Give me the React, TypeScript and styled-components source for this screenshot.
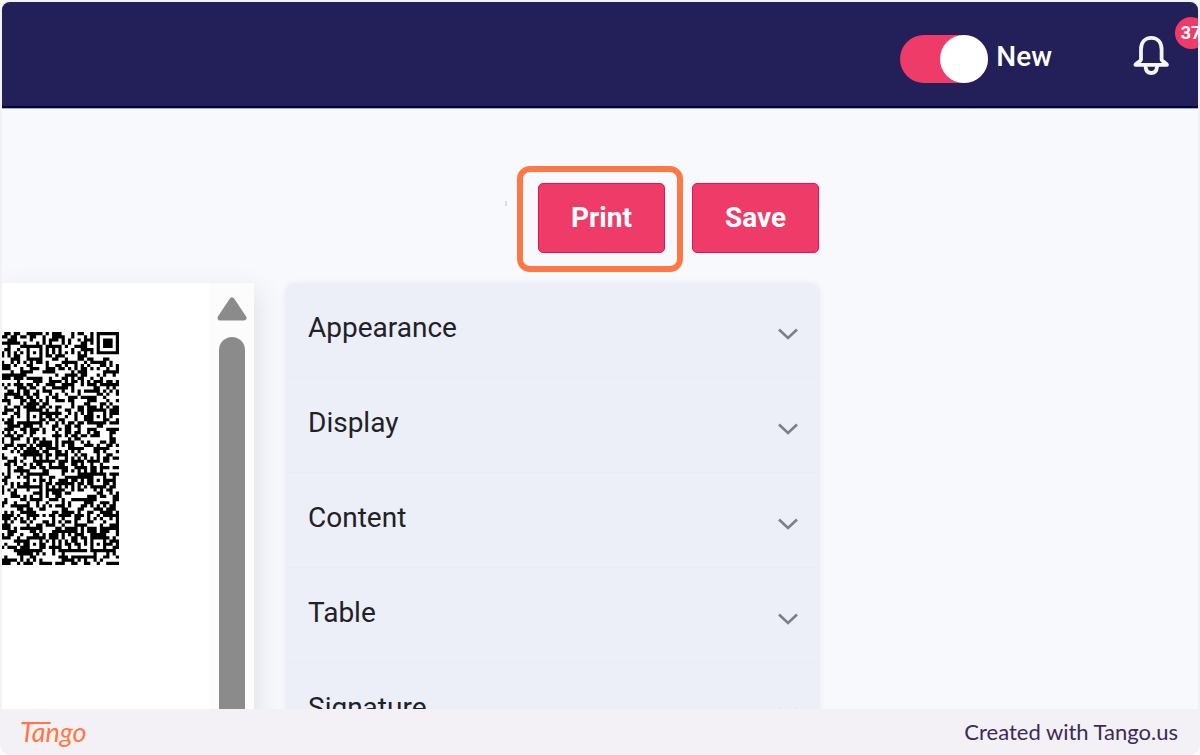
import React from "react";
import styled, { createGlobalStyle } from "styled-components";

const GlobalStyle = createGlobalStyle`
  *, *::before, *::after { box-sizing: border-box; }
  body { margin: 0; background: #fdfdfe; font-family: Roboto, "Liberation Sans", sans-serif; }
  button { font: inherit; border: 0; margin: 0; cursor: pointer; }
`;

const Page = styled.div`
  display: flex;
  flex-direction: column;
  height: 100vh;
  padding: 2px 2px 0;
  background: #f3f1f6;
  border-radius: 10px;
  overflow: hidden;
`;

const Screen = styled.main`
  flex: 1;
  min-height: 0;
  overflow: hidden;
  border-radius: 8px 8px 0 0;
  background: #f8f9fd;
`;

const TopBar = styled.header`
  display: flex;
  justify-content: flex-end;
  align-items: center;
  gap: 81px;
  height: 106px;
  padding: 0 29px 0 0;
  background: #221f59;
  border-bottom: 2px solid #02003f;
  box-shadow: 0 1px 0 #a9abb5;
`;

const SwitchLabel = styled.label`
  display: flex;
  align-items: center;
  gap: 8px;
  padding-top: 10px;
  color: #ffffff;
  font-size: 28px;
  line-height: 32px;
  font-weight: 500;
`;

const SwitchText = styled.span`
  padding-bottom: 4px;
`;

const Switch = styled.input`
  appearance: none;
  display: flex;
  justify-content: flex-end;
  width: 88px;
  height: 48px;
  margin: 0;
  border-radius: 24px;
  background: #ef3b68;
  &::before {
    content: "";
    width: 48px;
    height: 48px;
    border-radius: 50%;
    background: #ffffff;
  }
  &:not(:checked) { justify-content: flex-start; background: #8c8aa8; }
`;

const BellButton = styled.button`
  position: relative;
  display: flex;
  padding: 2px 0 0;
  background: none;
`;

const Badge = styled.span`
  position: absolute;
  left: 42px;
  top: -16px;
  width: 32px;
  height: 32px;
  border-radius: 50%;
  background: #ef3b68;
  color: #ffffff;
  font-size: 18px;
  line-height: 32px;
  font-weight: 700;
  text-align: center;
`;

const Toolbar = styled.div`
  display: flex;
  justify-content: flex-end;
  align-items: center;
  gap: 27px;
  padding: 75px 379px 30px 0;
`;

const Speck = styled.span`
  width: 2px;
  height: 5px;
  margin: 0 4px 30px 0;
  background: #d3dfec;
`;

const ActionButton = styled.button`
  width: 127px;
  height: 70px;
  padding: 0;
  border-radius: 5px;
  border: 1px solid #ec1250;
  background: #ef3b68;
  color: #ffffff;
  font-size: 28px;
  line-height: 32px;
  font-weight: 700;
`;

const Highlighted = styled.div`
  position: relative;
  display: flex;
  &::after {
    content: "";
    position: absolute;
    inset: -17px -18px -19px -21px;
    border: 6px solid #ff7742;
    border-radius: 13px;
    pointer-events: none;
  }
`;

const Workspace = styled.div`
  display: grid;
  grid-template-columns: 252px minmax(0, 1fr);
  gap: 31px;
  padding-right: 378px;
`;

const Preview = styled.section`
  display: flex;
  justify-content: space-between;
  background: #ffffff;
  box-shadow: 4px 8px 24px rgba(60, 70, 100, 0.13);
`;

const Code = styled.svg`
  display: block;
  width: 117px;
  height: 233px;
  margin-top: 49px;
`;

const ScrollTrack = styled.div`
  display: flex;
  flex-direction: column;
  align-items: center;
  gap: 16px;
  width: 45px;
  padding-top: 14px;
  background: #fcfcfc;
`;

const ScrollThumb = styled.div`
  flex: 1;
  width: 26px;
  border-radius: 13px;
  background: #8b8b8b;
`;

const Panel = styled.section`
  border-radius: 10px;
  background: #eceff8;
  box-shadow: 0 0 6px rgba(60, 70, 100, 0.07);
`;

const PanelRow = styled.button`
  display: flex;
  align-items: center;
  justify-content: space-between;
  width: 100%;
  height: 95px;
  padding: 0 22px 5px 23px;
  border-bottom: 1px solid #e8ecf5;
  background: none;
  color: #212126;
  font-size: 28px;
  line-height: 32px;
  text-align: left;
`;

const Chevron = styled.svg`
  width: 20px;
  height: 12px;
  margin-top: 13px;
`;

const Footer = styled.footer`
  display: flex;
  align-items: center;
  justify-content: space-between;
  height: 46px;
  padding: 0 20px 0 18px;
  background: #f3f1f6;
`;

const Logo = styled.a`
  position: relative;
  color: #ff7742;
  font-family: Lato, sans-serif;
  font-size: 27px;
  line-height: 32px;
  font-style: italic;
  font-weight: 400;
  text-decoration: none;
  &::before {
    content: "";
    position: absolute;
    left: 2px;
    top: 6px;
    width: 29px;
    height: 2px;
    border-radius: 1px;
    background: #ff7742;
  }
`;

const Credit = styled.span`
  color: #3d2a55;
  font-family: Lato, sans-serif;
  font-size: 22px;
  line-height: 32px;
`;

const CODE_SIZE = 73;
const FIRST_COLUMN = 36;

const isDark = (() => {
  const noise = (x: number, y: number) => {
    let h = Math.imul(x + 101, 374761393) ^ Math.imul(y + 57, 668265263);
    h = Math.imul(h ^ (h >>> 13), 1274126177);
    h = Math.imul(h ^ (h >>> 15), 2246822519);
    return ((h ^ (h >>> 16)) >>> 0) / 4294967296 < 0.51;
  };
  const ring = (dx: number, dy: number) => Math.max(Math.abs(dx), Math.abs(dy));
  return (x: number, y: number) => {
    if (x >= CODE_SIZE) return false;
    const finder = ring(x - (CODE_SIZE - 4), y - 3);
    if (finder <= 4) return finder === 3 || finder <= 1;
    for (const ax of [46, 66]) {
      for (const ay of [6, 26, 46, 66]) {
        if (ax === 66 && ay === 6) continue;
        const d = ring(x - ax, y - ay);
        if (d <= 2) return d !== 1;
      }
    }
    if (y === 6) return x % 2 === 0;
    return noise(x, y);
  };
})();

const codePath = (() => {
  let d = "";
  for (let y = 0; y < CODE_SIZE; y++) {
    for (let x = FIRST_COLUMN; x < CODE_SIZE; x++) {
      if (!isDark(x, y)) continue;
      let end = x;
      while (isDark(end, y)) end++;
      d += `M${x} ${y}H${end}V${y + 1}H${x}Z`;
      x = end;
    }
  }
  return d;
})();

const sections = ["Appearance", "Display", "Content", "Table", "Signature"];

export default function App() {
  return (
    <Page>
      <GlobalStyle />
      <Screen>
        <TopBar>
          <SwitchLabel>
            <Switch type="checkbox" role="switch" defaultChecked />
            <SwitchText>New</SwitchText>
          </SwitchLabel>
          <BellButton aria-label="Notifications">
            <svg width="36" height="41" viewBox="0 0 36 41" fill="none" stroke="#f5f5fb" strokeWidth="3.8" strokeLinecap="round" strokeLinejoin="round">
              <path d="M8 14.5C8 7.5 12 2.8 18.3 2.8S28.6 7.5 28.6 14.5V24.5C28.6 26.5 34 28 34 29.8H2.4C2.4 28 8 26.5 8 24.5Z" />
              <path d="M12.6 32C13 36 15.3 38 18.3 38S23.6 36 24 32" />
            </svg>
            <Badge>37</Badge>
          </BellButton>
        </TopBar>
        <Toolbar>
          <Speck />
          <Highlighted>
            <ActionButton>Print</ActionButton>
          </Highlighted>
          <ActionButton>Save</ActionButton>
        </Toolbar>
        <Workspace>
          <Preview>
            <Code viewBox="36.3 0 36.7 73" preserveAspectRatio="none" role="img" aria-label="QR code">
              <path d={codePath} fill="#000000" />
            </Code>
            <ScrollTrack>
              <svg width="30" height="24" viewBox="0 0 30 24">
                <path d="M15 3 27 21H3Z" fill="#8b8b8b" stroke="#8b8b8b" strokeWidth="5" strokeLinejoin="round" />
              </svg>
              <ScrollThumb />
            </ScrollTrack>
          </Preview>
          <Panel>
            {sections.map((name) => (
              <PanelRow key={name} aria-expanded="false">
                {name}
                <Chevron viewBox="0 0 20 12" fill="none" stroke="#7d7f84" strokeWidth="2.6">
                  <path d="M1 1.5 10 10 19 1.5" />
                </Chevron>
              </PanelRow>
            ))}
          </Panel>
        </Workspace>
      </Screen>
      <Footer>
        <Logo href="#">Tango</Logo>
        <Credit>Created with Tango.us</Credit>
      </Footer>
    </Page>
  );
}
